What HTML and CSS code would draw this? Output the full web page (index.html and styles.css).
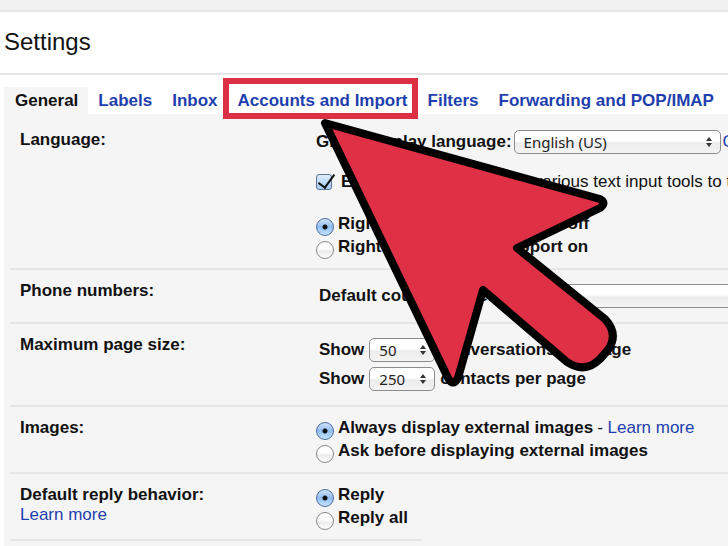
FILE: index.html
```
<!DOCTYPE html>
<html lang="en">

<head>
  <meta charset="UTF-8">
  <meta name="viewport" content="width=device-width, initial-scale=1.0">
  <title>Settings</title>
  <link rel="stylesheet" href="styles.css">
</head>

<body>

  <div class="topbar"></div>

  <header class="header">
    <h1>Settings</h1>
  </header>

  <nav class="tabs">
    <a href="#general" class="tab tab-active">General</a>
    <a href="#labels" class="tab">Labels</a>
    <a href="#inbox" class="tab">Inbox</a>
    <a href="#accounts" class="tab tab-marked">Accounts and Import</a>
    <a href="#filters" class="tab">Filters</a>
    <a href="#forwarding" class="tab">Forwarding and POP/IMAP</a>
  </nav>

  <main class="panel">
    <section class="row row-first">
      <h2>Language:</h2>
      <div class="options language">
        <div class="line">
          <label for="language">Gmail display language:</label>
          <span class="picker picker-language">
            <select id="language">
              <option>English (US)</option>
            </select>
            <svg width="8" height="10" viewBox="0 0 8 10"><path d="M4 0l3 4H1zM4 10l3-4H1z"/></svg>
          </span>
          <a href="#change">Change</a>
        </div>
        <div class="line tools">
          <input type="checkbox" id="tools" class="check" checked>
          <span><label for="tools">Enable input tools:</label> Use various text input tools to type</span>
        </div>
        <div class="choice">
          <input type="radio" name="rtl" id="rtl-off" class="radio" checked>
          <label for="rtl-off">Right-to-left editing support off</label>
        </div>
        <div class="choice">
          <input type="radio" name="rtl" id="rtl-on" class="radio">
          <label for="rtl-on">Right-to-left editing support on</label>
        </div>
      </div>
    </section>

    <section class="row row-selects">
      <h2>Phone numbers:</h2>
      <div class="options">
        <div class="line">
          <label for="country">Default country code:</label>
          <span class="picker picker-country">
            <select id="country">
              <option>Indonesia</option>
            </select>
            <svg width="8" height="10" viewBox="0 0 8 10"><path d="M4 0l3 4H1zM4 10l3-4H1z"/></svg>
          </span>
        </div>
      </div>
    </section>

    <section class="row row-selects">
      <h2>Maximum page size:</h2>
      <div class="options sizes">
        <div class="line">
          <label for="conversations">Show</label>
          <span class="picker">
            <select id="conversations">
              <option>50</option>
            </select>
            <svg width="8" height="10" viewBox="0 0 8 10"><path d="M4 0l3 4H1zM4 10l3-4H1z"/></svg>
          </span>
          <b>conversations per page</b>
        </div>
        <div class="line">
          <label for="contacts">Show</label>
          <span class="picker">
            <select id="contacts">
              <option>250</option>
            </select>
            <svg width="8" height="10" viewBox="0 0 8 10"><path d="M4 0l3 4H1zM4 10l3-4H1z"/></svg>
          </span>
          <b>contacts per page</b>
        </div>
      </div>
    </section>

    <section class="row">
      <h2>Images:</h2>
      <div class="options">
        <div class="choice">
          <input type="radio" name="images" id="images-always" class="radio" checked>
          <label for="images-always">Always display external images</label>
          <span>- <a href="#images">Learn more</a></span>
        </div>
        <div class="choice">
          <input type="radio" name="images" id="images-ask" class="radio">
          <label for="images-ask">Ask before displaying external images</label>
        </div>
      </div>
    </section>

    <section class="row row-last">
      <div>
        <h2>Default reply behavior:</h2>
        <a href="#reply">Learn more</a>
      </div>
      <div class="options">
        <div class="choice">
          <input type="radio" name="reply" id="reply-one" class="radio" checked>
          <label for="reply-one">Reply</label>
        </div>
        <div class="choice">
          <input type="radio" name="reply" id="reply-all" class="radio">
          <label for="reply-all">Reply all</label>
        </div>
      </div>
    </section>
  </main>

  <!-- big pointer over the page -->
  <svg class="pointer" width="300" height="276" viewBox="318 116 300 276">
    <path d="M325 123L600 199Q607 203 600 208L517 248L605 319Q619 334 608 350L600 359Q585 374 567 362L483 290L458 378Q453 387 448 378Z"/>
  </svg>

</body>

</html>
```

FILE: styles.css
```
* {
  box-sizing: border-box;
}

body {
  position: relative;
  margin: 0;
  background-color: #fff;
  color: #111;
  font-family: "Liberation Sans", Arial, sans-serif;
  font-size: 17px;
  line-height: 20px;
}

a {
  color: #1f3fae;
  text-decoration: none;
}

h1,
h2 {
  margin: 0;
}

.topbar {
  height: 12px;
  background-color: #f0f0f0;
  border-bottom: 2px solid #e6e6e6;
}

.header {
  padding: 15px 4px 16px;
  border-bottom: 2px solid #e6e6e6;
}

.header h1 {
  font-size: 24px;
  font-weight: normal;
  line-height: 30px;
}

.tabs {
  display: flex;
  padding: 12px 0 0 4px;
  white-space: nowrap;
}

.tab {
  padding: 4px 10px 3px;
  font-weight: bold;
}

.tab-active {
  padding-left: 11px;
  background-color: #f5f5f5;
  color: #111;
}

.tab-marked {
  position: relative;
}

.tab-marked::after {
  content: "";
  position: absolute;
  inset: -9px 0 -5px -5px;
  border: 6px solid #dc3045;
}

.panel {
  margin-left: 4px;
  padding: 0 0 6px 6px;
  background-color: #f5f5f5;
  white-space: nowrap;
  overflow: hidden;
}

.row {
  display: grid;
  grid-template-columns: 296px 1fr;
  padding: 11px 0 8px 10px;
  border-bottom: 2px solid #e6e6e6;
}

.row-first {
  padding-top: 16px;
}

.row-selects {
  padding-bottom: 14px;
}

.row-selects .options {
  padding-top: 3px;
}

.row-last {
  width: 412px;
}

.row h2,
.row label,
.row b {
  font-size: 17px;
  font-weight: bold;
}

.options {
  min-width: 0;
}

.line {
  display: flex;
  align-items: center;
  gap: 5px;
  padding-left: 3px;
}

.language .line {
  gap: 2px;
  padding-left: 0;
}

.language .tools {
  gap: 9px;
  padding: 18px 0 22px;
}

.choice {
  display: flex;
  gap: 4px;
  height: 23px;
}

.sizes {
  display: grid;
  gap: 5px;
}

.picker {
  display: inline-grid;
  align-items: center;
  flex: none;
  width: 66px;
}

.picker select,
.picker svg {
  grid-area: 1 / 1;
}

.picker svg {
  justify-self: end;
  margin-right: 8px;
  fill: #333;
  pointer-events: none;
}

.picker select {
  appearance: none;
  width: 100%;
  height: 24px;
  padding: 0 9px;
  border: 1px solid #8c8c8c;
  border-radius: 5px;
  background: linear-gradient(#fff 45%, #ececec 55%, #f4f4f4);
  color: #222;
  font-family: "Noto Sans", sans-serif;
  font-size: 15px;
}

.picker-language {
  width: 207px;
}

.picker-country {
  width: 340px;
}

.check,
.radio {
  appearance: none;
  flex: none;
  margin: 0;
}

.check {
  position: relative;
  width: 16px;
  height: 16px;
  border: 1px solid #5f7596;
  border-radius: 3px;
  background: linear-gradient(#dcebfc, #a3cdf8);
}

.check::after {
  content: "";
  position: absolute;
  left: 5px;
  top: -4px;
  width: 7px;
  height: 15px;
  border: solid #111;
  border-width: 0 2px 2px 0;
  transform: rotate(36deg);
}

.radio {
  width: 18px;
  height: 18px;
  margin-top: 4px;
  border: 1px solid #888;
  border-radius: 50%;
  background: linear-gradient(#fff 40%, #ececec 60%, #fff);
}

.radio:checked {
  border-color: #4c6c9c;
  background: radial-gradient(circle, #111 2px, transparent 3px), linear-gradient(#cfe2f9, #8fbdf2 50%, #c4e4ff);
}

.pointer {
  position: absolute;
  left: 318px;
  top: 116px;
  pointer-events: none;
}

.pointer path {
  fill: #df3045;
  stroke: #000;
  stroke-width: 8px;
  stroke-linejoin: round;
}
```
